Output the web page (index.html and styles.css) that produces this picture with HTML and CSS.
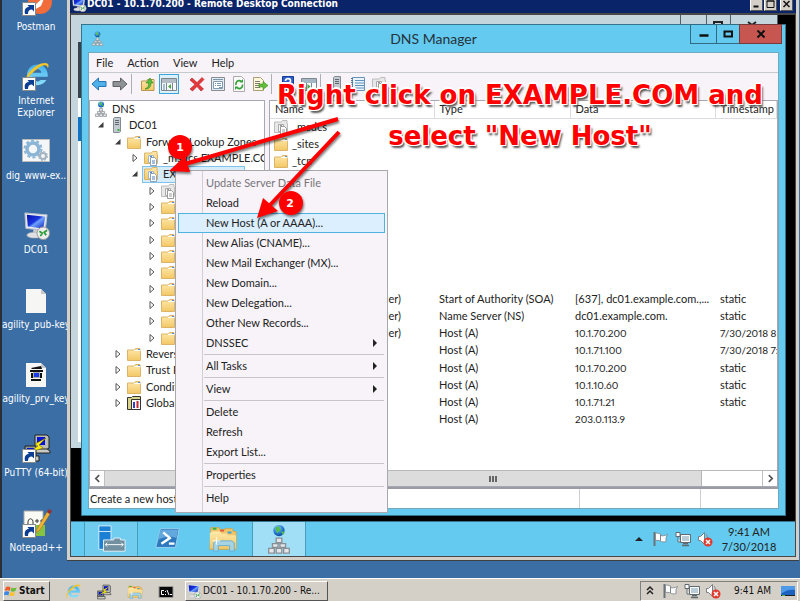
FILE: index.html
```html
<!DOCTYPE html>
<html lang="en">
<head>
<meta charset="utf-8">
<title>DC01 - 10.1.70.200 - Remote Desktop Connection</title>
<link rel="stylesheet" href="styles.css">
</head>
<body>
<svg class="defs" aria-hidden="true">
  <defs>
    <linearGradient id="gold" x1="0" y1="0" x2="0" y2="1"><stop offset="0" stop-color="#ffe9ab"/><stop offset="1" stop-color="#f3c765"/></linearGradient>
    <linearGradient id="screen" x1="0" y1="0" x2="1" y2="1"><stop offset="0" stop-color="#0710a8"/><stop offset=".45" stop-color="#1a36e0"/><stop offset=".55" stop-color="#6ea2ff"/><stop offset="1" stop-color="#0a1cb8"/></linearGradient>
    <radialGradient id="globe" cx=".4" cy=".3" r=".8"><stop offset="0" stop-color="#8fd8ff"/><stop offset=".6" stop-color="#1c6fd0"/><stop offset="1" stop-color="#093a86"/></radialGradient>
    <linearGradient id="ieblue" x1="0" y1="0" x2="0" y2="1"><stop offset="0" stop-color="#3fb0ee"/><stop offset="1" stop-color="#8fe0fb"/></linearGradient>
    <symbol id="folder" viewBox="0 0 16 16"><path d="M1.500 4h7l1-1.500h4.500v3h.5v9h-13z" fill="url(#gold)" stroke="#dcb468"/><path d="M8 4.500h6" stroke="#fff"/><path d="M12 3h2v1h-2z" fill="#4f8fd4"/></symbol>
    <symbol id="zone" viewBox="0 0 16 16"><path d="M1.500 3h7l1-1.500h4.500v3h.5v9h-13z" fill="url(#gold)" stroke="#dcb468"/><path d="M5.500 5.500h5v7h-5z" fill="#fff" stroke="#a5b7c8"/><path d="M7.500 7.500h4l2 2v6h-6z" fill="#fff" stroke="#8ba3ba"/><path d="M9 11h3M9 13h3M7 6.500h2" stroke="#4c7fc0"/></symbol>
    <symbol id="greyzone" viewBox="0 0 16 16"><path d="M1.500 3h7l1-1.500h4.500v3h.5v9h-13z" fill="#e8e8e8" stroke="#bcbcbc"/><path d="M5.500 5.500h5v7h-5z" fill="#f8f8f8" stroke="#aaa"/><path d="M7.500 7.500h4l2 2v6h-6z" fill="#fff" stroke="#999"/><path d="M9 11h3M9 13h3M7 6.500h2" stroke="#999"/></symbol>
    <symbol id="dns" viewBox="0 0 16 16"><circle cx="8" cy="3.500" r="3" fill="url(#globe)"/><path d="M6 2l2-1 1 2-2 2zM9 4l2 0-1 2z" fill="#53bd50"/><path d="M6.500 7.500h3v2.500h-3zM4.500 10.500h3v2h-3zM8.500 10.500h3v2h-3zM2.500 13h3v2.500h-3zM6.500 13h3v2.500h-3zM10.500 13h3v2.500h-3z" fill="#e4e6e8" stroke="#8a8f96" stroke-width=".7"/></symbol>
    <symbol id="server" viewBox="0 0 16 16"><path d="M4.500 1.500l1-1h6v14l-1 1h-6z" fill="#c4cbd0" stroke="#828b92"/><path d="M6 3.500h4M6 5.500h4M6 7.500h4" stroke="#5f686e"/><path d="M8.500 12h2v2h-2z" fill="#3fae45"/></symbol>
    <symbol id="shortcut" viewBox="0 0 14 14"><path d="M.5.500h13v13H.500z" fill="#fff" stroke="#888"/><path d="M3 12C2 7 4 5 7 5L5.500 3H12v6.500L10 7.500C7 7.500 6 9 6 12z" fill="#0c3f94"/></symbol>
    <symbol id="ie" viewBox="0 0 30 30"><path d="M26.500 20A11.500 11.500 0 1 1 28 13v3.500H11c1 6 7 6 9 3.500zM11 12h10c-1-5.500-9-5.500-10 0z" fill="url(#ieblue)" fill-rule="evenodd"/><path d="M3 27C-1 20 12 1 25 1c4 0 5 3 3 6 0-5-6-4-12 1C8 14 3 20 4 25z" fill="#f4c52b"/></symbol>
    <symbol id="putty" viewBox="0 0 30 30"><path d="M13 2h12l2 2v11l-3 2H13z" fill="#b9bcb0" stroke="#222"/><path d="M15 4h8v8h-8z" fill="#0713d3"/><path d="M11 16h14l3 2v2H11zM3 23h14v5H3z" fill="#c9cbc3" stroke="#222"/><path d="M3 13h11v10H3z" fill="#8e9492" stroke="#222"/><path d="M5 15h7v6H5z" fill="#0713d3"/><path d="M24 5L13 11l3 2-10 7 15-5-4-3z" fill="#ffee12" stroke="#776b00" stroke-width=".6"/></symbol>
    <symbol id="monitor" viewBox="0 0 30 30"><path d="M3 2l23 2-2 16-20-2z" fill="#e7e9ee" stroke="#b9bec9"/><path d="M5 4l19 2-2 12-16-2z" fill="url(#screen)"/><path d="M12 19l6 1-1 4H11z" fill="#ccc"/><ellipse cx="13" cy="25" rx="8" ry="3" fill="#dfe0e3" stroke="#aaa" stroke-width=".6"/><circle cx="22" cy="23" r="6.500" fill="#ededed" stroke="#969696"/><path d="M18 21l3 2-2 3M26 20l-3 2 2 3" fill="none" stroke="#279b36" stroke-width="1.800"/></symbol>
    <symbol id="explorer" viewBox="0 0 32 28"><path d="M3 6V2h9l1 2h5V3h8l1 3h3v19H2z" fill="#eec669" stroke="#d2a548"/><path d="M4 6h9l1 2h6l1 2h9v14H2V8z" fill="url(#gold)"/><path d="M5 2h4v2H5z" fill="#2eb34c"/><path d="M13 4h4v2h-4z" fill="#e9513d"/><path d="M21 6h4v2h-4z" fill="#3aa1e8"/><path d="M6 27V18l3-2h16l3 2v9h-5v-6H11v6z" fill="#9fd4ee" fill-opacity=".9" stroke="#64afd5"/><path d="M9 12v8M5 16h8" stroke="#fff"/></symbol>
    <symbol id="flag" viewBox="0 0 16 16"><path d="M1.500 1v14" stroke="#6b7278" stroke-width="2"/><path d="M2.500 2.500c2-1 3 0 5 .5v7c-2-.5-3-1-5-.5zM7.500 4.500c2 .5 4 .5 7-1l-1.500 3v4c-2 .8-4 .5-5.500-.5z" fill="#fff" stroke="#7a8086" stroke-width=".8"/></symbol>
    <symbol id="network" viewBox="0 0 16 16"><path d="M5.500 3.500h10v8h-10z" fill="#b9ccd7" stroke="#616a71"/><path d="M6.500 4.500h8v6h-8z" fill="none" stroke="#fff"/><path d="M8 12.500h5M7 14.500h7" stroke="#616a71" stroke-width="1.500"/><path d="M1 1.500h4v4H1zM3 6v5h2" fill="#fff" stroke="#616a71"/></symbol>
    <symbol id="mute" viewBox="0 0 16 16"><path d="M1.500 5.500h2l4-4v12l-4-4h-2z" fill="#fff" stroke="#7a8086"/><path d="M9 3c2 2 2 6 0 9" fill="none" stroke="#8a9096"/><circle cx="11" cy="11" r="4.500" fill="#e03a30"/><path d="M9 9l4 4m0-4l-4 4" stroke="#fff" stroke-width="1.500"/></symbol>
    <symbol id="open" viewBox="0 0 8 8"><path d="M6.500 1v5.500H1z" fill="#3c3c3c"/></symbol>
    <symbol id="closed" viewBox="0 0 8 8"><path d="M2 .5l4 3.500-4 3.500z" fill="#fff" stroke="#555"/></symbol>
  </defs>
</svg>

<main class="desktop">
  <nav class="shortcuts" aria-label="Desktop">
    <a href="#"><svg class="pic" viewBox="0 0 32 32"><circle cx="20" cy="16" r="12" fill="#f26b3a"/><path d="M14 20l11-10-4 10-7 4z" fill="#fff"/><use href="#shortcut" x="2" y="16" width="14" height="14"/></svg>Postman</a>
    <a href="#"><svg class="pic" viewBox="0 0 32 32"><use href="#ie" x="2" y="2" width="28" height="27"/><use href="#shortcut" x="2" y="17" width="14" height="14"/></svg>Internet<br>Explorer</a>
    <a href="#"><svg class="pic" viewBox="0 0 32 32"><path d="M2.500 4.500h27v22h-27z" fill="#f5f6f7" stroke="#bbb"/><circle cx="13" cy="14" r="6" fill="none" stroke="#8ab5d7" stroke-width="3.500"/><circle cx="13" cy="14" r="8.500" fill="none" stroke="#8ab5d7" stroke-width="2" stroke-dasharray="3 2.400"/><circle cx="23" cy="21" r="3" fill="none" stroke="#a2b3c0" stroke-width="2"/><circle cx="23" cy="21" r="4.500" fill="none" stroke="#a2b3c0" stroke-dasharray="2 1.500"/></svg>dig_www-ex..</a>
    <a href="#"><svg class="pic" viewBox="0 0 32 32"><use href="#monitor" x="2" y="2" width="29" height="29"/></svg>DC01</a>
    <a href="#"><svg class="pic" viewBox="0 0 32 32"><path d="M6 5h15l5 5v19H6z" fill="#f6f6f4"/><path d="M21 5v5h5z" fill="#c6c8ca"/></svg>agility_pub-key</a>
    <a href="#"><svg class="pic" viewBox="0 0 32 32"><path d="M6 5h15l5 5v19H6z" fill="#f6f6f4"/><path d="M21 5v5h5z" fill="#c6c8ca"/><path d="M11 10l10-2 1 3H12z" fill="#111"/><path d="M10 13h13M12 15v5m9-5v5M11 22h10" stroke="#111" stroke-width="2"/><path d="M13.500 14.500h6v5h-6z" fill="#173cf0" stroke="#aaa"/></svg>agility_prv_key</a>
    <a href="#"><svg class="pic" viewBox="0 0 32 32"><use href="#putty" x="2" y="1" width="30" height="30"/><use href="#shortcut" x="2" y="17" width="14" height="14"/></svg>PuTTY (64-bit)</a>
    <a href="#"><svg class="pic" viewBox="0 0 32 32"><path d="M4 4h19v24H4z" fill="#fbfbf6" stroke="#aaa"/><path d="M16 18h9v11h-9z" fill="#84c441"/><path d="M8 17c-1-7 6-7 5 0M15 14h4M17 12v4M20 14h4M22 12v4" fill="none" stroke="#333"/><path d="M27 5L17 22l-1 4 4-3L30 7z" fill="#f2b234" stroke="#8b6c28" stroke-width=".5"/><path d="M27 5l2-3 3 2-2 3z" fill="#9b3030"/><use href="#shortcut" x="2" y="17" width="14" height="14"/></svg>Notepad++</a>
  </nav>

  <section class="rdp" aria-label="Remote Desktop Connection">
    <header class="rdp-title">
      <svg class="rdp-icon" viewBox="0 0 30 30"><use href="#monitor"/></svg>
      <h1>DC01 - 10.1.70.200 - Remote Desktop Connection</h1>
      <button class="classic" aria-label="Minimize"><svg viewBox="0 0 10 10"><path d="M2 7.500h5" stroke="#111" stroke-width="2"/></svg></button>
      <button class="classic" aria-label="Maximize"><svg viewBox="0 0 10 10"><path d="M1.500 2h7v6.500h-7zM1 2h8" fill="none" stroke="#111"/></svg></button>
      <button class="classic apart" aria-label="Close"><svg viewBox="0 0 10 10"><path d="M2 2l6 6m0-6L2 8" stroke="#111" stroke-width="1.500"/></svg></button>
    </header>

    <div class="remote">
      <div class="back-window">
        <div class="back-controls"><span></span><span><svg viewBox="0 0 10 8"><path d="M1 1h8v6H1z" fill="none" stroke="#222" stroke-width="2"/></svg></span><span><svg viewBox="0 0 10 8"><path d="M1 1l8 6m0-6L1 7" stroke="#222" stroke-width="2"/></svg></span></div>
        <div class="back-edge"><i class="dark"></i><i class="blue"></i></div>
      </div>

      <section class="dns-window" aria-label="DNS Manager">
        <header class="dns-title">
          <svg class="dns-icon"><use href="#dns"/></svg>
          <h2>DNS Manager</h2>
          <div class="controls">
            <button aria-label="Minimize"><svg viewBox="0 0 12 10"><path d="M1.500 6.500h9" stroke="#111" stroke-width="2.500"/></svg></button>
            <button class="max" aria-label="Maximize"><svg viewBox="0 0 12 10"><path d="M2.500 2.500h7.500v5H2.500z" fill="none" stroke="#111" stroke-width="2"/></svg></button>
            <button class="close" aria-label="Close"><svg viewBox="0 0 12 10"><path d="M2.500 1.500l7 7m0-7l-7 7" stroke="#111" stroke-width="2"/></svg></button>
          </div>
        </header>
        <div class="dns-body">
          <nav class="menubar"><button>File</button><button>Action</button><button>View</button><button>Help</button></nav>
          <div class="toolbar">
            <div class="group">
              <button aria-label="Back"><svg viewBox="0 0 16 16"><path d="M1 8l6.500-6v3.500H15v5H7.500V14z" fill="#4fb0ea" stroke="#2575b6"/></svg></button>
              <button aria-label="Forward"><svg viewBox="0 0 16 16"><path d="M15 8L8.500 2v3.500H1v5h7.500V14z" fill="#8f9396" stroke="#5e6265"/></svg></button>
            </div>
            <div class="group">
              <button aria-label="Up one level"><svg viewBox="0 0 16 16"><path d="M1.500 5h5l1-1.500H14v11H1.500z" fill="url(#gold)" stroke="#b8974e"/><path d="M5 13c3-1 4-4 3.500-6H6l4-5 3 5h-2c0 4-2 6-6 6z" fill="#57be3c" stroke="#328221" stroke-width=".6"/></svg></button>
              <button class="pressed" aria-label="Show console tree"><svg viewBox="0 0 16 16"><path d="M.5 2.500h15v12H.500z" fill="#f6fafd" stroke="#7d868d"/><path d="M1 4h14M1 6h14" stroke="#9da8b1" stroke-width="1.500"/><path d="M5.500 7v7M11.500 7v7" stroke="#7d868d"/><path d="M10 8v5l-3-2.500z" fill="#44a53a"/><path d="M2 9h2M2 11h2M2 13h2" stroke="#4d86bf"/></svg></button>
            </div>
            <div class="group blank">
              <button aria-label="Delete"><svg viewBox="0 0 16 16"><path d="M3 2l5 4.500L13 1.500l2 2L10 8.500l4.500 4.500-2.500 2L8 10.500 3.500 15l-2.500-2L6 8.500 1 4z" fill="#e4383b" stroke="#ab2024" stroke-width=".6"/></svg></button>
              <button aria-label="Properties"><svg viewBox="0 0 16 16"><path d="M1.500 1.500h13v13h-13z" fill="#e8ebed" stroke="#868d93"/><path d="M3.500 5.500h9v7h-9z" fill="#fff" stroke="#7e9db5"/><path d="M3 3.500h10M5 7.500h1M7 7.500h4M5 9.500h1M7 9.500h4M9 11.500h3" stroke="#7796b0"/></svg></button>
              <button aria-label="Refresh"><svg viewBox="0 0 16 16"><path d="M2.500.500h8l3 3v12h-11z" fill="#fafafa" stroke="#aaa"/><path d="M10.500 5.500C7 3 4.500 6 5 9M6 11.500c3 2.500 6 0 5.500-3" fill="none" stroke="#32a236" stroke-width="1.700"/><path d="M9 6.500h3V3zM7 10.500H4V14z" fill="#32a236"/></svg></button>
              <button aria-label="Export List"><svg viewBox="0 0 16 16"><path d="M1.500 1.500h7l3 3v10h-10z" fill="#fff8dc" stroke="#a99e76"/><path d="M3 5.500h5M3 7.500h5M3 9.500h5M3 11.500h5" stroke="#7b7d70"/><path d="M7 8h4V5.500l5 4-5 4V11H7z" fill="#62bd38" stroke="#3f8d24" stroke-width=".6"/></svg></button>
            </div>
            <div class="group">
              <button aria-label="Help"><svg viewBox="0 0 16 16"><path d="M2.500.500h11v15h-11z" fill="#2b5fd0" stroke="#163c98"/><path d="M5.500 5c0-3.500 5.500-3 5 0-.2 2-2.500 2-2.500 4.500M8 11v2" fill="none" stroke="#fff" stroke-width="1.700"/></svg></button>
              <button aria-label="Show action pane"><svg viewBox="0 0 16 16"><path d="M.5 2.500h15v12H.500z" fill="#f6fafd" stroke="#7d868d"/><path d="M1 4h14M1 6h14" stroke="#8ba0b1" stroke-width="1.500"/><path d="M5.500 7v7M10.500 7v7" stroke="#7d868d"/><path d="M6.500 8v5l3-2.500z" fill="#44a53a"/></svg></button>
            </div>
            <div class="group">
              <button aria-label="New server"><svg viewBox="0 0 16 16"><use href="#server"/></svg></button>
              <button aria-label="List records"><svg viewBox="0 0 16 16"><path d="M2.500 1.500h12v13h-12z" fill="#eaf3fa" stroke="#6993b5"/><path d="M5 4.500h9M5 7h9M5 9.500h9M5 12h9" stroke="#5e92bf"/><path d="M2 2v12" stroke="#4d7193" stroke-width="2" stroke-dasharray="1 1"/></svg></button>
              <button aria-label="New zone"><svg viewBox="0 0 16 16"><use href="#greyzone"/></svg></button>
            </div>
          </div>

          <div class="panes">
            <div class="pane tree-pane">
              <ul class="tree">
                <li class="l0"><svg><use href="#dns"/></svg>DNS</li>
                <li class="l1"><svg class="tw"><use href="#open"/></svg><svg><use href="#server"/></svg>DC01</li>
                <li class="l2"><svg class="tw"><use href="#open"/></svg><svg><use href="#folder"/></svg>Forward Lookup Zones</li>
                <li class="l3"><svg class="tw"><use href="#closed"/></svg><svg><use href="#zone"/></svg>_msdcs.EXAMPLE.COM</li>
                <li class="l3"><svg class="tw"><use href="#open"/></svg><span class="selected"><svg><use href="#zone"/></svg>EXAMPLE.COM</span></li>
                <li class="l4"><svg class="tw"><use href="#closed"/></svg><svg><use href="#greyzone"/></svg></li>
                <li class="l4"><svg class="tw"><use href="#closed"/></svg><svg><use href="#folder"/></svg></li>
                <li class="l4"><svg class="tw"><use href="#closed"/></svg><svg><use href="#folder"/></svg></li>
                <li class="l4"><svg class="tw"><use href="#closed"/></svg><svg><use href="#folder"/></svg></li>
                <li class="l4"><svg class="tw"><use href="#closed"/></svg><svg><use href="#folder"/></svg></li>
                <li class="l4"><svg class="tw"><use href="#closed"/></svg><svg><use href="#folder"/></svg></li>
                <li class="l4"><svg class="tw"><use href="#closed"/></svg><svg><use href="#folder"/></svg></li>
                <li class="l4"><svg class="tw"><use href="#closed"/></svg><svg><use href="#folder"/></svg></li>
                <li class="l4"><svg class="tw"><use href="#closed"/></svg><svg><use href="#folder"/></svg></li>
                <li class="l4"><svg class="tw"><use href="#closed"/></svg><svg><use href="#folder"/></svg></li>
                <li class="l2"><svg class="tw"><use href="#closed"/></svg><svg><use href="#folder"/></svg>Reverse Lookup Zones</li>
                <li class="l2"><svg class="tw"><use href="#closed"/></svg><svg><use href="#folder"/></svg>Trust Points</li>
                <li class="l2"><svg class="tw"><use href="#closed"/></svg><svg><use href="#folder"/></svg>Conditional Forwarders</li>
                <li class="l2"><svg class="tw"><use href="#closed"/></svg><svg viewBox="0 0 16 16"><path d="M1.500 2.500h4l1-1h8v13h-13z" fill="#d9d48a" stroke="#333"/><path d="M5.500 4.500h9v10h-9z" fill="#fff" stroke="#333"/><path d="M8 7v6" stroke="#2c42c8" stroke-width="2"/><path d="M11.500 6v7" stroke="#c62a2a" stroke-width="2"/></svg>Global Logs</li>
              </ul>
              <div class="scroll"><button aria-label="Scroll left"><svg viewBox="0 0 8 8"><path d="M5.500 1L2.500 4l3 3" fill="none" stroke="#555" stroke-width="1.500"/></svg></button><span class="thumb"></span></div>
            </div>

            <div class="pane list-pane">
              <table>
                <colgroup><col class="c-name"><col class="c-type"><col class="c-data"><col></colgroup>
                <thead><tr><th>Name</th><th>Type</th><th>Data</th><th>Timestamp</th></tr></thead>
                <tbody>
                  <tr><td><svg><use href="#greyzone"/></svg>_msdcs</td><td></td><td></td><td></td></tr>
                  <tr><td><svg><use href="#folder"/></svg>_sites</td><td></td><td></td><td></td></tr>
                  <tr><td><svg><use href="#folder"/></svg>_tcp</td><td></td><td></td><td></td></tr>
                  <tr><td></td><td></td><td></td><td></td></tr>
                  <tr><td></td><td></td><td></td><td></td></tr>
                  <tr><td></td><td></td><td></td><td></td></tr>
                  <tr><td></td><td></td><td></td><td></td></tr>
                  <tr><td></td><td></td><td></td><td></td></tr>
                  <tr><td></td><td></td><td></td><td></td></tr>
                  <tr><td></td><td></td><td></td><td></td></tr>
                  <tr><td><svg></svg>(same as parent folder)</td><td>Start of Authority (SOA)</td><td>[637], dc01.example.com.,...</td><td>static</td></tr>
                  <tr><td><svg></svg>(same as parent folder)</td><td>Name Server (NS)</td><td>dc01.example.com.</td><td>static</td></tr>
                  <tr><td><svg></svg>(same as parent folder)</td><td>Host (A)</td><td class="num">10.1.70.200</td><td class="num">7/30/2018 8:</td></tr>
                  <tr><td></td><td>Host (A)</td><td class="num">10.1.71.100</td><td class="num">7/30/2018 7:</td></tr>
                  <tr><td></td><td>Host (A)</td><td class="num">10.1.70.200</td><td>static</td></tr>
                  <tr><td></td><td>Host (A)</td><td class="num">10.1.10.60</td><td>static</td></tr>
                  <tr><td></td><td>Host (A)</td><td class="num">10.1.71.21</td><td>static</td></tr>
                  <tr><td></td><td>Host (A)</td><td class="num">203.0.113.9</td><td></td></tr>
                </tbody>
              </table>
              <div class="scroll"><button aria-label="Scroll left"></button><span class="thumb"></span><span class="track"></span><button aria-label="Scroll right"><svg viewBox="0 0 8 8"><path d="M2.500 1l3 3-3 3" fill="none" stroke="#555" stroke-width="1.500"/></svg></button></div>
            </div>
          </div>
          <footer class="status"><span>Create a new host</span><span></span><span></span></footer>
        </div>
      </section>

      <div class="menu" role="menu">
        <button role="menuitem" disabled>Update Server Data File</button>
        <button role="menuitem">Reload</button>
        <button role="menuitem" class="active">New Host (A or AAAA)...</button>
        <button role="menuitem">New Alias (CNAME)...</button>
        <button role="menuitem">New Mail Exchanger (MX)...</button>
        <button role="menuitem">New Domain...</button>
        <button role="menuitem">New Delegation...</button>
        <button role="menuitem">Other New Records...</button>
        <button role="menuitem" class="sub">DNSSEC</button>
        <hr>
        <button role="menuitem" class="sub">All Tasks</button>
        <hr>
        <button role="menuitem" class="sub">View</button>
        <hr>
        <button role="menuitem">Delete</button>
        <button role="menuitem">Refresh</button>
        <button role="menuitem">Export List...</button>
        <hr>
        <button role="menuitem">Properties</button>
        <hr>
        <button role="menuitem">Help</button>
      </div>

      <footer class="remote-bar">
        <button class="app framed" aria-label="Server Manager"><svg viewBox="0 0 32 32"><path d="M3 2h13v25H3z" fill="#1b7fd3" stroke="#d9f1fc"/><path d="M3 8h13" stroke="#d9f1fc"/><path d="M14 17h5v-2h7v2h5v12H8V17z" fill="#72909f" stroke="#e6f2f8"/><path d="M10 22h19M12 20l-2 2 2 2M27 20l2 2-2 2" fill="none" stroke="#fff"/></svg></button>
        <button class="app" aria-label="PowerShell"><svg viewBox="0 0 32 32"><path d="M9 5h20l-4 20H4z" fill="#2d78bd" stroke="#9ad2f2"/><path d="M9 6h19l-2 9C18 12 12 14 6 17z" fill="#63a8dc"/><path d="M12 9l7 6-9 6M18 21h6" fill="none" stroke="#fff" stroke-width="2.500"/></svg></button>
        <button class="app" aria-label="File Explorer"><svg viewBox="0 0 32 28"><use href="#explorer"/></svg></button>
        <button class="app current" aria-label="DNS Manager"><svg viewBox="0 0 16 16"><use href="#dns"/></svg></button>
        <div class="tray">
          <svg viewBox="0 0 16 16"><path d="M4 10h8L8 6z" fill="#222"/></svg>
          <svg><use href="#flag"/></svg><svg><use href="#network"/></svg><svg><use href="#mute"/></svg>
          <time>9:41 AM<br>7/30/2018</time>
        </div>
      </footer>
    </div>
  </section>
</main>

<footer class="taskbar">
  <button class="start"><svg viewBox="0 0 16 16"><path d="M2 4c2-2 4-1 5.500 0L6.500 8C5 7 3 7 1 8z" fill="#f05a28"/><path d="M8.500 4c2 1 3 1 6 0l-1.500 4c-2 1-4 1-5.500 0z" fill="#6cbb38"/><path d="M.5 9c2-1 4-1 5.500 0l-1 4c-2-1-3-1-5 0z" fill="#3b86e8"/><path d="M7 9c2 1 4 1 5.500 0l-1 4c-2 1-4 1-5.500 0z" fill="#fbc02d"/></svg>Start</button>
  <div class="quick">
    <button aria-label="Internet Explorer"><svg viewBox="0 0 30 30"><use href="#ie"/></svg></button>
    <button aria-label="PuTTY"><svg viewBox="0 0 30 30"><use href="#putty"/></svg></button>
    <button aria-label="Explorer"><svg viewBox="0 0 32 28"><use href="#explorer"/></svg></button>
    <button aria-label="Command Prompt"><svg viewBox="0 0 16 16"><path d="M1 2.500h14v11H1z" fill="#080808" stroke="#999"/><path d="M6 6.500H3.500v4H6M7.500 7v1m0 2v1M9 6l2 5M12 10.500h2" fill="none" stroke="#fff"/></svg></button>
  </div>
  <button class="task"><svg viewBox="0 0 30 30"><use href="#monitor"/></svg>DC01 - 10.1.70.200 - Re...</button>
  <div class="local-tray">
    <svg viewBox="0 0 16 16"><path d="M5 7l3-3 3 3M5 11l3-3 3 3" fill="none" stroke="#222" stroke-width="1.500"/></svg>
    <svg><use href="#flag"/></svg><svg><use href="#network"/></svg><svg><use href="#mute"/></svg>
    <time>9:41 AM</time>
    <svg viewBox="0 0 16 16"><path d="M1 3h14v10H1z" fill="#1c62c0"/><path d="M1 3h14v4C9 6 5 8 1 11z" fill="#4d9be8"/><path d="M1 12.500h14" stroke="#222"/><path d="M2 12.500h3" stroke="#57c04b"/></svg>
  </div>
</footer>

<div class="callouts">
  <svg viewBox="0 0 400 240">
    <g class="marks">
      <path d="M338 119L185 164M339 132L270 205" fill="none" stroke="#f00" stroke-width="4"/>
      <path d="M169 171l16-15 5 16zM257 218l6-20 15 13z" fill="#f00"/>
      <circle cx="180" cy="147" r="12" fill="#f00"/><circle cx="291" cy="203" r="12" fill="#f00"/>
    </g>
    <text x="180" y="151">1</text><text x="290" y="207">2</text>
  </svg>
  <p>Right click on EXAMPLE.COM and<br>select "New Host"</p>
</div>
</body>
</html>
```
FILE: styles.css
```css
* { box-sizing: border-box; }
:root { --ui: Lato, "Open Sans", sans-serif; --classic: "DejaVu Sans Condensed", "DejaVu Sans", sans-serif; --sky: #64caef; --face: #d4d0c8; --soft: #f7f3f8; }
body { margin: 0; height: 100vh; display: flex; flex-direction: column; overflow: hidden; background: #3a6ea5; font: 11px/16px var(--ui); color: #222; position: relative; }
button { font: inherit; color: inherit; border: 0; padding: 0; margin: 0; background: none; }
svg { display: block; flex: none; width: 16px; height: 16px; }
.defs { position: absolute; width: 0; height: 0; }
h1, h2, p, ul { margin: 0; padding: 0; }
i { display: block; }

.desktop { flex: 1; min-height: 0; display: grid; grid-template-columns: 67px minmax(0, 1fr); border-left: 2px solid #2b3038; margin-right: 1px; }
.shortcuts { display: grid; grid-auto-rows: minmax(0, 1fr); width: 68px; margin: -14px 0 -3px; }
.shortcuts a { display: flex; flex-direction: column; align-items: center; color: #fff; text-decoration: none; text-align: center; white-space: nowrap; font: 10px/12px var(--classic); }
.shortcuts .pic { width: 32px; height: 32px; margin-bottom: 3px; }

.rdp { position: relative; display: flex; flex-direction: column; min-width: 0; margin: 0 0 18px -2px; border: solid var(--face); border-width: 0 3px 3px; background: #000; box-shadow: 0 1px #404040; }
.rdp-title { display: flex; align-items: center; height: 13px; background: #0a246a; color: #fff; padding: 0 3px 0 1px; }
.rdp-title h1 { flex: 1; font: bold 10px/12px var(--classic); align-self: flex-start; margin-top: -2px; }
.rdp-icon { margin: -6px 0 0; }
.classic { width: 13px; height: 13px; margin-top: -5px; background: var(--face); border: 1px solid; border-color: #fff #555 #555 #fff; margin-left: 1px; }
.classic svg { width: 11px; height: 10px; }
.classic.apart { margin-left: 3px; }
.remote { position: relative; flex: 1; min-height: 0; display: flex; flex-direction: column; justify-content: flex-end; border: solid #484848; border-width: 2px 1px 1px; }

.back-window { position: absolute; left: 0; top: 0; right: 17px; bottom: 108px; background: #c5d5dd; }
.back-controls { display: flex; justify-content: flex-end; height: 9px; }
.back-controls span { width: 24px; border-left: 1px solid #536068; padding: 6px 6px 0; }
.back-controls span:first-child { width: 26px; }
.back-controls span:last-child { width: 48px; border-right: 1px solid #536068; padding-left: 16px; }
.back-controls svg { width: 10px; height: 8px; }
.back-edge { width: 3px; margin: 18px 0 0 7px; background: #fff; height: 400px; }
.back-edge .dark { height: 56px; background: #39414a; }
.back-edge .blue { height: 24px; margin-top: 19px; background: #0d73c8; }

.dns-window { position: absolute; left: 10px; right: 9px; top: 9px; bottom: 40px; display: flex; flex-direction: column; background: var(--sky); border: 1px solid #36738c; padding: 0 6px 6px; }
.dns-title { height: 27px; display: flex; align-items: center; position: relative; }
.dns-icon { width: 15px; height: 15px; margin-left: 2px; }
.dns-title h2 { flex: 1; text-align: center; margin-right: 17px; font: 14px/20px var(--ui); color: #24333b; }
.controls { position: absolute; right: -3px; top: -1px; display: flex; }
.controls button { width: 27px; height: 20px; display: grid; place-items: center; border: 1px solid #2f6b83; margin-left: -1px; }
.controls .max { width: 24px; }
.controls .close { width: 43px; background: #c75650; border-color: #773a3c; }
.controls svg { width: 12px; height: 10px; }
.dns-body { flex: 1; min-height: 0; display: flex; flex-direction: column; border: 1px solid #74a9bd; background: var(--soft); }
.menubar { display: flex; height: 20px; gap: 14px; padding-left: 7px; border-bottom: 1px solid #c5cacd; }
.toolbar { display: flex; align-items: flex-start; height: 27px; padding-top: 1px; }
.group { display: flex; gap: 1px; }
.group + .group { margin-left: 1px; padding-left: 6px; border-left: 1px solid #aab0b4; }
.group + .blank { border-color: transparent; }
.group button { width: 20px; height: 20px; display: grid; place-items: center; }
.group .pressed { border: 1px solid #38a5dc; background: #dcf0fb; }

.panes { flex: 1; min-height: 0; display: grid; grid-template-columns: 176px minmax(0, 1fr); gap: 4px; }
.pane { display: flex; flex-direction: column; justify-content: space-between; overflow: hidden; background: #fff; border: 1px solid #a6a9b2; min-width: 0; }
.tree { list-style: none; display: grid; grid-auto-rows: minmax(0, 1fr); height: 310px; padding-left: 3px; }
.tree li { display: flex; align-items: center; gap: 4px; white-space: nowrap; }
.tree .tw { width: 8px; height: 8px; }
.tree .l0 { gap: 3px; }
.tree .l1 { padding-left: 4px; }
.tree .l2 { padding-left: 21px; }
.tree .l3 { padding-left: 38px; }
.tree .l4 { padding-left: 55px; }
.selected { display: flex; align-items: center; gap: 4px; background: #d6ecfb; box-shadow: 0 0 0 1px #7fc3ea; height: 15px; padding-right: 3px; }
.scroll { display: flex; height: 16px; background: #fff; border-top: 1px solid #b9b9b9; }
.scroll button { width: 15px; display: grid; place-items: center; border-right: 1px solid #c0c0c0; }
.scroll svg { width: 9px; height: 9px; }
.scroll button:last-child { border-left: 1px solid #c0c0c0; border-right: 0; }
.thumb { flex: 1; display: grid; place-items: center; background: #dcdcdc; border-right: 1px solid #b5b5b5; }
.thumb::after { content: ""; width: 8px; height: 6px; background: repeating-linear-gradient(90deg, #666 0 2px, transparent 2px 3px); }
.track { width: 60px; }

table { table-layout: fixed; border-collapse: collapse; width: 100%; height: 327px; }
.c-name { width: 164px; }
.c-type { width: 136px; }
.c-data { width: 145px; }
th { height: 17px; font-weight: normal; text-align: left; padding: 0 0 0 5px; border-right: 1px solid #dcdce2; border-bottom: 1px solid #dcdce2; line-height: 16px; }
td { height: 17px; padding: 0 0 0 5px; line-height: 16px; white-space: nowrap; overflow: hidden; }
td:first-child { padding-left: 3px; }
.num { font-size: 10px; font-variant-numeric: proportional-nums; }
td svg { float: left; margin-right: 3px; }

.status { display: flex; height: 21px; background: #fff; border-top: 2px solid #9a9ca3; line-height: 20px; }
.status span { padding-left: 1px; border-right: 1px solid #cfcfcf; width: 121px; }
.status span:first-child { flex: 1; }
.status span:last-child { width: 77px; border: 0; }

.menu { position: absolute; left: 104px; top: 155px; width: 213px; padding: 2px 2px 4px; border: 1px solid #a9a9ad; background: linear-gradient(90deg, transparent 26px, #cfcfd4 26px 27px, transparent 27px) var(--soft); }
.menu button { display: block; position: relative; width: 100%; height: 20px; padding-left: 28px; text-align: left; line-height: 18px; }
.menu button:disabled { color: #77757a; }
.menu .active { border: 1px solid #4fb3e2; background: #dcefff; padding-left: 27px; }
.menu hr { height: 1px; margin: 1px 1px 1px 26px; border: 0; background: #c6c6cb; }
.menu .sub::after { content: ""; position: absolute; right: 8px; top: 6px; border: solid transparent; border-width: 4px 0 4px 4px; border-left-color: #222; }

.remote-bar { height: 35px; display: flex; align-items: stretch; padding-left: 13px; background: var(--sky); border-top: 1px solid #36738c; }
.app { width: 54px; margin-right: 2px; display: grid; place-items: center; }
.app svg { width: 30px; height: 30px; }
.framed { border: solid #489db9; border-width: 0 1px; background: #70cdf0; }
.current { background: #a1dff7; border: solid #489db9; border-width: 0 1px; }
.tray { margin-left: auto; display: flex; align-items: center; gap: 6px; padding-right: 16px; }
.tray time { font: 11px/15px var(--ui); text-align: center; width: 60px; }

.taskbar { height: 23px; display: flex; align-items: stretch; padding: 2px 2px 0 3px; background: var(--face); border-top: 1px solid #fff; font: 10px/16px var(--classic); color: #111; }
.start { width: 47px; display: flex; align-items: center; gap: 1px; font-weight: bold; border: 1px solid; border-color: #fff #555 #555 #fff; }
.start svg { width: 14px; }
.quick { display: flex; gap: 15px; padding: 2px 11px 0 15px; }
.task { width: 143px; display: flex; align-items: center; gap: 1px; border: 1px solid; border-color: #fff #555 #555 #fff; white-space: nowrap; }
.local-tray { margin-left: auto; display: flex; align-items: center; gap: 5px; padding: 0 1px; border: 1px solid; border-color: #808080 #fff #fff #808080; }
.local-tray time { margin: 0 4px 0 8px; }

.callouts { position: absolute; left: 0; top: 0; pointer-events: none; }
.callouts svg { width: 400px; height: 240px; }
.marks { filter: drop-shadow(1px 2px 1px rgb(0 0 0 / 50%)); }
.callouts text { font: bold 11px "DejaVu Sans", sans-serif; fill: #fff; text-anchor: middle; }
.callouts p { position: absolute; left: 270px; top: 75px; width: 500px; text-align: center; white-space: nowrap; font: bold 26px/41px "DejaVu Sans", sans-serif; color: #f00; text-shadow: -1px -1px #fff, 1px -1px #fff, -1px 1px #fff, 1px 1px #fff, 0 -2px #fff, -2px 0 #fff, 2px 3px 2px #555; }
```
